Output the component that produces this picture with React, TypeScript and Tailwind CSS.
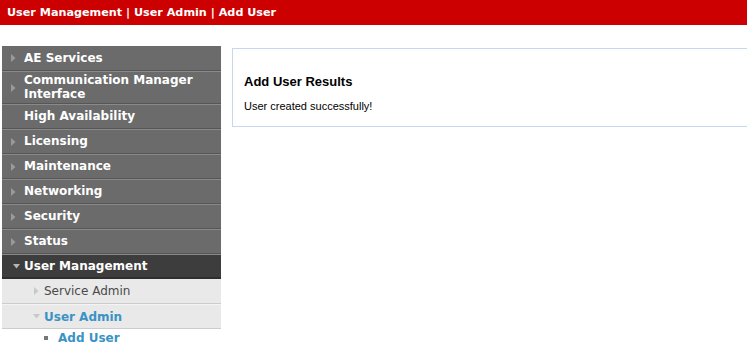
import React from 'react';

const font = { fontFamily: '"DejaVu Sans", Verdana, sans-serif' };

const Arrow = ({ down = false, color = '#9a9a9a' }: { down?: boolean; color?: string }) =>
  down ? (
    <svg width="7" height="5" viewBox="0 0 7 5" className="shrink-0">
      <path d="M0 0 L7 0 L3.5 4.5 Z" fill={color} />
    </svg>
  ) : (
    <svg width="5" height="8" viewBox="0 0 5 8" className="shrink-0">
      <path d="M0 0 L4.5 4 L0 8 Z" fill={color} />
    </svg>
  );

const menu: { label: string[]; arrow: boolean }[] = [
  { label: ['AE Services'], arrow: true },
  { label: ['Communication Manager', 'Interface'], arrow: true },
  { label: ['High Availability'], arrow: false },
  { label: ['Licensing'], arrow: true },
  { label: ['Maintenance'], arrow: true },
  { label: ['Networking'], arrow: true },
  { label: ['Security'], arrow: true },
  { label: ['Status'], arrow: true },
];

export default function App() {
  return (
    <div className="w-[747px] h-[346px] overflow-hidden bg-white" style={font}>
      {/* Breadcrumb bar */}
      <div className="h-[25px] bg-[#cc0000] flex items-center px-[7px] pt-[2px] text-white text-[11.2px] font-bold">
        User Management | User Admin | Add User
      </div>

      <div className="flex items-start pt-[21px] pl-[2px] gap-[11px]">
        {/* Sidebar */}
        <div className="w-[219px] shrink-0 flex flex-col">
          {menu.map((m, i) => (
            <div
              key={m.label[0]}
              className={`flex items-center gap-[8px] pl-[9px] border-b border-[#565656] bg-[#6b6b6b] text-white text-[12px] font-bold leading-[14px] ${i > 0 ? 'border-t border-t-[#8a8a8a]' : ''} ${m.label.length > 1 ? 'h-[33px]' : 'h-[25px]'}`}
            >
              <span className="w-[5px] flex">{m.arrow && <Arrow />}</span>
              <span className="-mt-[1px]">
                {m.label.map((l) => (
                  <span key={l} className="block">{l}</span>
                ))}
              </span>
            </div>
          ))}
          <div className="flex items-center gap-[4px] pl-[11px] h-[25px] border-t border-[#8a8a8a] border-b-2 border-b-[#2e2e2e] bg-[#3d3d3d] text-white text-[12px] font-bold leading-[14px]">
            <Arrow down color="#b5b5b5" />
            <span>User Management</span>
          </div>
          <div className="flex items-center gap-[5px] pl-[32px] h-[25px] border-b border-[#cccccc] bg-[#e9e9e9] text-[#4a4a4a] text-[12px] leading-[14px]">
            <Arrow color="#c8c8c8" />
            <span>Service Admin</span>
          </div>
          <div className="flex items-center gap-[4px] pl-[31px] h-[25px] border-t border-[#f4f4f4] border-b border-b-[#cccccc] bg-[#e9e9e9] text-[#3a93c4] text-[12px] font-bold leading-[14px]">
            <Arrow down color="#c8c8c8" />
            <span>User Admin</span>
          </div>
          <div className="flex items-center gap-[10px] pl-[42px] h-[17px] bg-white text-[#3a93c4] text-[12px] font-bold leading-[14px]">
            <span className="w-[4px] h-[4px] bg-[#777777] shrink-0" />
            <span>Add User</span>
          </div>
        </div>

        {/* Content */}
        <div className="flex-1 mt-[2px] h-[79px] border border-r-0 border-[#c6d7ee] px-[11px] pt-[24px]" style={{ fontFamily: '"Liberation Sans", Arial, sans-serif' }}>
          <div className="text-[13px] font-bold text-black leading-[17px]">Add User Results</div>
          <div className="text-[11px] text-black mt-[10px] leading-[13px]">User created successfully!</div>
        </div>
      </div>
    </div>
  );
}
